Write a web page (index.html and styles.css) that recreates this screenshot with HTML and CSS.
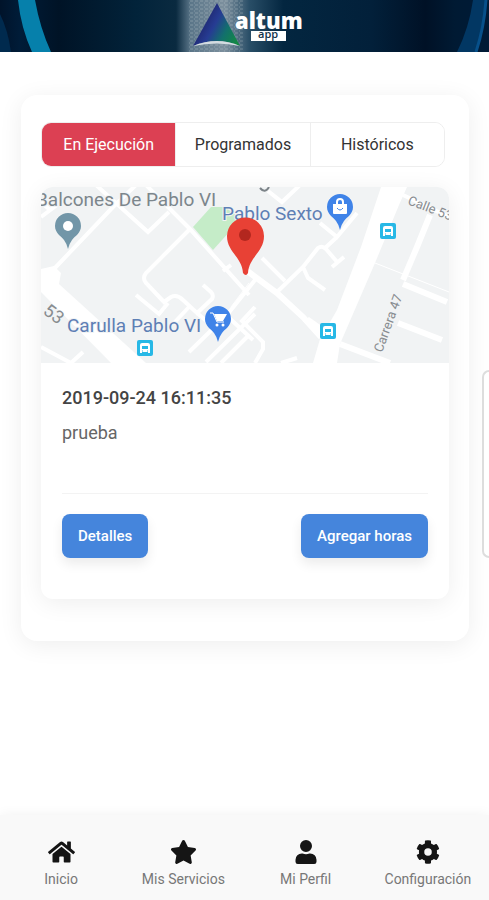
FILE: index.html
```html
<!DOCTYPE html>
<html lang="es">
<head>
    <meta charset="UTF-8">
    <meta name="viewport" content="width=device-width, initial-scale=1.0">
    <title>Altum App</title>
    <link rel="stylesheet" href="styles.css">
</head>
<body>
<header class="header">
    <svg class="header-bg" viewBox="0 0 489 52" preserveAspectRatio="xMidYMid slice" aria-hidden="true">
        <defs>
            <linearGradient id="sky">
                <stop offset="0" stop-color="#00132a"/>
                <stop offset="0.04" stop-color="#001c38"/>
                <stop offset="0.12" stop-color="#001326"/>
                <stop offset="0.28" stop-color="#02233a"/>
                <stop offset="0.36" stop-color="#0a2a40"/>
                <stop offset="0.39" stop-color="#5b7689"/>
                <stop offset="0.46" stop-color="#7d909e"/>
                <stop offset="0.51" stop-color="#294e67"/>
                <stop offset="0.58" stop-color="#032640"/>
                <stop offset="0.76" stop-color="#02203a"/>
                <stop offset="0.87" stop-color="#001126"/>
                <stop offset="0.93" stop-color="#001a33"/>
                <stop offset="1" stop-color="#001a36"/>
            </linearGradient>
            <pattern id="grid" width="5" height="4" patternUnits="userSpaceOnUse">
                <path d="M0 1h3M4 3h1" stroke="#d5dde2" stroke-width="1" opacity="0.3"/>
            </pattern>
        </defs>
        <rect width="489" height="52" fill="url(#sky)"/>
        <path d="M0 14Q8 30 11 52H0z" fill="#002a4e"/>
        <path d="M18 0H35Q40 28 51 52H32Q21 28 18 0z" fill="#0680ab"/>
        <path d="M473 0H486Q484 28 476 52H457Q469 28 473 0z" fill="#023763"/>
        <path d="M486 0Q484 28 476 52" fill="none" stroke="#07508a" stroke-width="3"/>
        <rect x="188" width="56" height="52" fill="url(#grid)"/>
    </svg>
    <svg class="logo" viewBox="0 0 130 52" width="130" height="52" role="img" aria-label="altum app">
        <defs>
            <linearGradient id="peak" x1="0" y1="0.3" x2="1" y2="0.8">
                <stop offset="0.1" stop-color="#1c1f62"/>
                <stop offset="0.45" stop-color="#263c93"/>
                <stop offset="0.7" stop-color="#12706c"/>
                <stop offset="1" stop-color="#148943"/>
            </linearGradient>
        </defs>
        <path d="M37 3L13 46Q37 36 60 46z" fill="url(#peak)"/>
        <path d="M13 46Q37 36 60 46Q37 41 13 46z" fill="#d4dce1"/>
        <text class="logo-name" x="55" y="29">altum</text>
        <rect x="71" y="31" width="35" height="10" fill="#fff"/>
        <text class="logo-app" x="78" y="38">app</text>
    </svg>
</header>

<main class="main">
    <section class="panel">
        <div class="tabs">
            <button type="button" class="tab active">En Ejecución</button>
            <button type="button" class="tab">Programados</button>
            <button type="button" class="tab">Históricos</button>
        </div>

        <article class="card">
            <svg class="map" viewBox="0 0 408 176" role="img" aria-label="Mapa del servicio">
                <defs>
                    <g id="bus">
                        <rect x="-8" y="-8" width="16" height="16" rx="2" fill="#27b8e6"/>
                        <path d="M-5 5V-3Q-5 -5 -3 -5H3Q5 -5 5 -3V5H3V4H-3V5z" fill="#fff"/>
                        <path d="M-3 -2H3V1H-3z" fill="#27b8e6"/>
                        <path d="M-3 3h1M2 3h1" stroke="#27b8e6"/>
                    </g>
                    <path id="pin" d="M0 23Q-1 18 -4 14C-7 10 -13 7 -13 0A13 13 0 0 1 13 0C13 7 7 10 4 14Q1 18 0 23z"/>
                </defs>
                <rect width="408" height="176" fill="#f1f3f4"/>
                <path d="M152 40L170 20H184L200 32L172 63z" fill="#c5ecc8"/>

                <!-- streets -->
                <g class="street">
                    <path d="M12 83L72 20L95 -2M55 -2L107 45L128 25M105 -2L148 41L208 108M0 30L16 18M0 15L8 22"/>
                    <path d="M148 43L105 86Q101 91 105 96L123 115L130 110Q136 107 142 113L156 126L171 112Q173 108 170 105L162 98"/>
                    <path d="M95 108L118 127L127 116M148 120L132 137M156 126L170 138"/>
                    <path d="M165 175L214 127M148 165L186 128L214 93M182 84L190 78"/>
                    <path d="M185 128L212 153M214 120L201 134L222 155V162L214 176M206 150L180 176"/>
                    <path d="M236 105L262 80L277 61Q281 58 285 62L297 76M291 80L303 70M262 80L267 91L284 103"/>
                    <path d="M221 71L244 94M279 36L296 50L316 26M283 62L296 50"/>
                    <path d="M227 4L241 15L259 -2M362 8L408 30"/>
                    <path d="M0 160L30 176M30 176L42 165M240 176L256 171"/>
                </g>
                <g class="street wide">
                    <path d="M389 28L376 60L362 93M362 97L406 115M357 136L401 153M299 157L349 176"/>
                    <path d="M205 83L236 106L262 130L280 150"/>
                </g>
                <path class="street thin" d="M334 76L408 105M190 120L208 96"/>
                <path d="M0 82L13 79L20 86L18 97L105 176H70L0 105z" fill="#fff"/>
                <path d="M340 0H366L358 18L334 76L299 157L296 176H272L279 152L262 134L268 130L285 142L296 123L320 60z" fill="#fff"/>

                <!-- names -->
                <text class="place grey" x="-5" y="19">Balcones De Pablo VI</text>
                <text class="place" x="181" y="33">Pablo Sexto</text>
                <text class="place" x="26" y="145">Carulla Pablo VI</text>
                <text class="road large" transform="translate(1 126) rotate(36)">53</text>
                <text class="road" transform="translate(366 17) rotate(21)">Calle 53</text>
                <text class="road" transform="translate(341 166) rotate(-70)">Carrera 47</text>
                <path d="M219 1Q224 7 228 0" fill="none" stroke="#7c8388" stroke-width="2"/>

                <use href="#bus" x="104" y="161"/>
                <use href="#bus" x="347" y="44"/>
                <use href="#bus" x="287" y="144"/>

                <!-- pins -->
                <use href="#pin" x="27" y="39" fill="#7296a8"/>
                <circle cx="27" cy="39" r="5" fill="#fff"/>
                <use href="#pin" x="299" y="20" fill="#3f83e8"/>
                <path d="M292 17H306V26Q306 27 305 27H293Q292 27 292 26z" fill="#fff"/>
                <path d="M296 17V15Q296 12 299 12Q302 12 302 15V17" fill="none" stroke="#fff" stroke-width="2"/>
                <path d="M296 21Q299 25 302 21" fill="none" stroke="#3f83e8" stroke-width="1"/>
                <use href="#pin" x="177" y="132" fill="#3f83e8"/>
                <path d="M169 126H172L176 135H183" fill="none" stroke="#fff" stroke-width="1"/>
                <path d="M173 127H186L182 134H176z" fill="#fff"/>
                <circle cx="176" cy="138" r="1.5" fill="#fff"/>
                <circle cx="182" cy="138" r="1.5" fill="#fff"/>
                <path d="M202 86C201 70 186 65 186 49A18 18 0 0 1 223 49C223 65 208 70 207 86Q205 90 202 86z" fill="#e84135"/>
                <circle cx="204" cy="48" r="6" fill="#b3271f"/>
            </svg>

            <div class="card-body">
                <h2 class="date">2019-09-24 16:11:35</h2>
                <p class="description">prueba</p>
                <div class="actions">
                    <button type="button" class="btn">Detalles</button>
                    <button type="button" class="btn">Agregar horas</button>
                </div>
            </div>
        </article>
    </section>
    <div class="drawer"></div>
</main>

<nav class="menu">
    <a href="#inicio">
        <svg viewBox="0 0 576 512" width="27" height="24"><path d="M280 149L96 300v164a16 16 0 0 0 16 16h112a16 16 0 0 0 16-16v-96a16 16 0 0 1 16-16h64a16 16 0 0 1 16 16v96a16 16 0 0 0 16 16h112a16 16 0 0 0 16-16V300L296 149a12 12 0 0 0-16 0zM571 251l-83-68V44a12 12 0 0 0-12-12h-56a12 12 0 0 0-12 12v73l-89-74a48 48 0 0 0-61 0L5 251a12 12 0 0 0-2 17l26 31a12 12 0 0 0 17 2L280 107a12 12 0 0 1 16 0l234 194a12 12 0 0 0 17-2l26-31a12 12 0 0 0-2-17z"/></svg>
        <span>Inicio</span>
    </a>
    <a href="#servicios">
        <svg viewBox="0 0 576 512" width="27" height="24"><path d="M259 18l-65 132-146 21c-26 4-36 36-17 55l105 103-25 145c-4 26 24 46 47 34l130-69 130 69c23 12 51-8 47-34l-25-145 105-103c19-19 9-51-17-55l-146-21-65-132c-12-24-46-24-58 0z"/></svg>
        <span>Mis Servicios</span>
    </a>
    <a href="#perfil">
        <svg viewBox="0 0 448 512" width="24" height="24"><path d="M224 256a128 128 0 1 0 0-256 128 128 0 0 0 0 256zm90 32h-17a174 174 0 0 1-146 0h-17A134 134 0 0 0 0 422v42a48 48 0 0 0 48 48h352a48 48 0 0 0 48-48v-42a134 134 0 0 0-134-134z"/></svg>
        <span>Mi Perfil</span>
    </a>
    <a href="#configuracion">
        <svg viewBox="0 0 512 512" width="24" height="24"><path d="M487 316l-42-25c4-23 4-47 0-70l42-25c5-3 7-9 6-14a248 248 0 0 0-55-95c-4-4-10-5-15-2l-42 24a188 188 0 0 0-61-35V25c0-6-4-11-10-12a252 252 0 0 0-110 0c-6 1-10 6-10 12v49a195 195 0 0 0-61 35L87 85c-5-3-11-2-15 2a247 247 0 0 0-55 95c-2 5 0 11 5 14l43 25c-4 23-4 47 0 70l-43 25c-5 3-7 9-5 14a248 248 0 0 0 55 95c4 4 10 5 15 2l42-24a188 188 0 0 0 61 35v49c0 6 4 11 10 12a252 252 0 0 0 110 0c6-1 10-6 10-12v-49a195 195 0 0 0 61-35l42 24c5 3 11 2 15-2a247 247 0 0 0 55-95c1-5-1-11-6-14zM256 336a80 80 0 1 1 0-160 80 80 0 0 1 0 160z"/></svg>
        <span>Configuración</span>
    </a>
</nav>
</body>
</html>
```

FILE: styles.css
```css
* {
    box-sizing: border-box;
}

body {
    margin: 0;
    min-height: 100vh;
    display: flex;
    flex-direction: column;
    background-color: #fff;
    font-family: Roboto, "Liberation Sans", sans-serif;
    color: #444;
    overflow-x: hidden;
}

button {
    font-family: inherit;
    cursor: pointer;
}

.header {
    position: relative;
    display: flex;
    justify-content: center;
    overflow: hidden;
    background-color: #001c33;
}

/* artwork behind the logo */
.header-bg {
    position: absolute;
    width: 100%;
    height: 100%;
}

.logo {
    position: relative;
}

.logo-name {
    font-family: "Open Sans", sans-serif;
    font-size: 22px;
    font-weight: 800;
    fill: #fff;
}

.logo-app {
    font-family: "Open Sans", sans-serif;
    font-size: 11px;
    font-weight: 600;
    fill: #12324a;
}

.main {
    position: relative;
    flex: 1;
    padding: 43px 20px 43px 21px;
}

.panel {
    padding: 27px 20px 42px;
    border-radius: 16px;
    background-color: #fff;
    box-shadow: 0 4px 24px rgba(0, 0, 0, 0.07);
}

.tabs {
    display: flex;
    margin-right: 4px;
    border: 1px solid #eee;
    border-radius: 10px;
    overflow: hidden;
}

.tab {
    flex: 1;
    height: 43px;
    padding: 0;
    border: 0;
    border-left: 1px solid #eee;
    background-color: #fff;
    color: #333;
    font-size: 16px;
}

.tab.active {
    border-left: 0;
    background-color: #dc4053;
    color: #fff;
}

.card {
    margin-top: 20px;
    border-radius: 12px;
    background-color: #fff;
    box-shadow: 0 4px 24px rgba(0, 0, 0, 0.07);
    overflow: hidden;
}

.map {
    display: block;
    width: 100%;
}

.street {
    fill: none;
    stroke: #fff;
    stroke-width: 4px;
}

.street.wide {
    stroke-width: 6px;
}

.street.thin {
    stroke-width: 1px;
}

.place {
    font-size: 19px;
    fill: #5e7fb5;
    stroke: #f1f3f4;
    stroke-width: 2px;
    paint-order: stroke;
}

.place.grey {
    fill: #7c868c;
}

.road {
    font-size: 13px;
    fill: #888c90;
}

.road.large {
    font-size: 18px;
}

.card-body {
    padding: 23px 21px 41px;
}

.date {
    margin: 0;
    font-size: 18px;
    font-weight: 500;
    line-height: 24px;
}

.description {
    margin: 0;
    padding: 11px 0 48px;
    border-bottom: 1px solid #f3f3f3;
    color: #666;
    font-size: 18px;
    line-height: 24px;
}

.actions {
    display: flex;
    justify-content: space-between;
    margin-top: 20px;
}

.btn {
    height: 44px;
    padding: 0 16px;
    border: 0;
    border-radius: 8px;
    background-color: #4585dc;
    color: #fff;
    font-size: 15px;
    font-weight: 500;
    box-shadow: 0 6px 12px rgba(0, 0, 0, 0.08);
}

/* edge of the side drawer, over the page */
.drawer {
    position: absolute;
    top: 318px;
    right: 0;
    width: 7px;
    height: 188px;
    border: 2px solid #ddd;
    border-right: 0;
    border-radius: 8px 0 0 8px;
    background-color: #fff;
}

.menu {
    display: flex;
    padding: 25px 0 12px;
    background-color: #f9f9f9;
    box-shadow: 0 0 12px rgba(0, 0, 0, 0.06);
}

.menu a {
    flex: 1;
    display: flex;
    flex-direction: column;
    align-items: center;
    gap: 6px;
    color: #777;
    font-size: 14px;
    line-height: 18px;
    text-decoration: none;
}

.menu svg {
    fill: #151515;
}
```
